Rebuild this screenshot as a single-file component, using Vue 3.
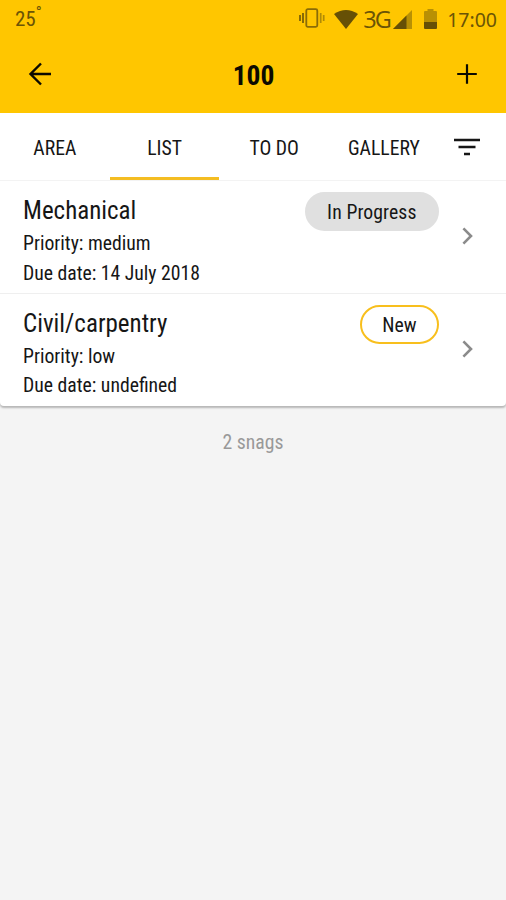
<template>
    <div class="page">
        <header class="header">
            <div class="status-bar">
                <span class="temperature">25<sup>°</sup></span>
                <div class="status-icons">
                    <svg class="vibrate" width="26" height="20" viewBox="0 0 26 20">
                        <rect x="7.3" y="1.2" width="11" height="17.6" rx="1.5" fill="none" stroke="#8a6c07"
                            stroke-width="1.8" />
                        <path d="M1 7v6M4 5v10" stroke="#735b08" stroke-width="1.7" />
                        <path d="M21.7 5v10M24.7 7v6" stroke="#b08b06" stroke-width="1.7" />
                    </svg>
                    <svg class="wifi" width="24" height="19" viewBox="0 0 24 19">
                        <path d="M0 4Q12-4 24 4L12 19Z" fill="#665006" />
                    </svg>
                    <span class="network">3G</span>
                    <svg class="signal" width="19" height="19" viewBox="0 0 19 19">
                        <path d="M0 19L19 0V19Z" fill="#b89004" />
                        <path d="M0 19L13.5 5.5V19Z" fill="#665006" />
                    </svg>
                    <svg class="battery" width="13" height="20" viewBox="0 0 13 20">
                        <path d="M0 3Q0 2 1 2H3.5V0H9.5V2H12Q13 2 13 3V13H0Z" fill="#b89004" />
                        <path d="M0 13H13V19Q13 20 12 20H1Q0 20 0 19Z" fill="#665006" />
                    </svg>
                    <span class="clock">17:00</span>
                </div>
            </div>
            <div class="title-bar">
                <svg width="24" height="24" viewBox="0 0 24 24" fill="none" stroke="#0c0a00" stroke-width="2.4">
                    <path d="M23 12H3M13 1.5L2.5 12L13 22.5" />
                </svg>
                <h1>{{ title }}</h1>
                <svg width="20" height="20" viewBox="0 0 20 20" fill="none" stroke="#0c0a00" stroke-width="2.2">
                    <path d="M10 0.2V19.8M0.2 10H19.8" />
                </svg>
            </div>
        </header>

        <nav class="tabs">
            <button v-for="tab in tabs" :key="tab" class="tab" :class="{ active: tab === activeTab }"
                @click="activeTab = tab">{{ tab }}</button>
            <div class="filter">
                <svg width="26" height="18" viewBox="0 0 26 18" stroke="#161616" stroke-width="2.6">
                    <path d="M0 2H26M4.5 9H21.5M10 16H16" />
                </svg>
            </div>
        </nav>

        <main class="list">
            <article v-for="snag in snags" :key="snag.name" class="snag">
                <div class="snag-info">
                    <h2>{{ snag.name }}</h2>
                    <p>Priority: {{ snag.priority }}</p>
                    <p>Due date: {{ snag.dueDate }}</p>
                </div>
                <span class="badge" :class="snag.type">{{ snag.status }}</span>
                <svg class="chevron" width="11" height="18" viewBox="0 0 11 18" fill="none" stroke="#8b8b8b"
                    stroke-width="2.6">
                    <path d="M1.4 1.4L9 9L1.4 16.6" />
                </svg>
            </article>
        </main>

        <p class="count">{{ snags.length }} snags</p>
    </div>
</template>

<script setup>
import { ref } from 'vue'

const title = '100'
const tabs = ['AREA', 'LIST', 'TO DO', 'GALLERY']
const activeTab = ref('LIST')

const snags = [
    { name: 'Mechanical', priority: 'medium', dueDate: '14 July 2018', status: 'In Progress', type: 'progress' },
    { name: 'Civil/carpentry', priority: 'low', dueDate: 'undefined', status: 'New', type: 'new' }
]
</script>

<style>
body {
    margin: 0;
    background: #f4f4f4;
}
</style>

<style scoped>
.page {
    min-height: 900px;
    background: #f4f4f4;
    color: #161616;
    font-family: "Roboto Condensed", Roboto, sans-serif;
    font-stretch: 75%;
    font-size: 19.7px;
}

h1,
h2,
p {
    margin: 0;
    font-weight: 400;
}

.header {
    height: 113px;
    background: #ffc600;
}

.status-bar {
    display: flex;
    justify-content: space-between;
    align-items: center;
    height: 38px;
    padding: 0 9px 0 15px;
    color: #6b5406;
}

.temperature {
    font-size: 21px;
}

.temperature sup {
    font-size: 16px;
    line-height: 0;
}

.status-icons {
    display: flex;
    align-items: center;
    height: 38px;
}

.vibrate {
    margin-top: -3px;
}

.wifi {
    margin-left: 9px;
}

.network {
    margin-left: 5px;
    font-family: "Open Sans", sans-serif;
    font-stretch: 88%;
    font-size: 23.5px;
    letter-spacing: -1.8px;
    line-height: 38px;
}

.signal {
    margin-left: 3px;
}

.battery {
    margin-left: 12px;
}

.clock {
    margin-left: 10px;
    font-family: "Noto Sans", sans-serif;
    font-stretch: 100%;
    font-size: 19.5px;
}

.title-bar {
    display: flex;
    justify-content: space-between;
    align-items: center;
    height: 71px;
    padding: 0 29px 0 28px;
}

.title-bar h1 {
    padding: 3px 2px 0 0;
    color: #0c0a00;
    font-size: 27.5px;
    font-weight: 700;
}

.tabs {
    display: flex;
    height: 68px;
    box-sizing: border-box;
    background: #fff;
    border-bottom: 1px solid #f3f3f3;
}

.tab {
    width: 109.7px;
    padding: 7px 0 0;
    border: 0;
    border-bottom: 3px solid transparent;
    background: none;
    color: inherit;
    font: inherit;
    font-stretch: inherit;
}

.tab.active {
    border-bottom-color: #f4bd22;
}

.filter {
    flex: 1;
    display: flex;
    align-items: center;
    justify-content: center;
    padding-right: 10px;
}

.list {
    border-radius: 0 0 4px 4px;
    background: #fff;
    box-shadow: 0 2px 2px rgba(0, 0, 0, 0.25);
}

.snag {
    display: flex;
    align-items: center;
    height: 112.5px;
    box-sizing: border-box;
    padding: 0 33px 0 23px;
    border-bottom: 1px solid #efefef;
}

.snag:last-child {
    border-bottom: 0;
}

.snag-info {
    flex: 1;
    align-self: flex-start;
    padding-top: 12px;
}

.snag-info h2 {
    font-size: 25px;
    line-height: 36px;
}

.snag-info p {
    line-height: 29.5px;
}

.badge {
    align-self: flex-start;
    height: 39px;
    box-sizing: border-box;
    margin: 11px 23px 0 0;
    padding: 0 20.5px;
    border: 2px solid #e0e0e0;
    border-radius: 20px;
    line-height: 37px;
}

.badge.progress {
    background: #e0e0e0;
    letter-spacing: 0.1px;
}

.badge.new {
    border-color: #f8bf1d;
    background: #fff;
}

.chevron {
    margin-top: -1px;
}

.count {
    padding-top: 25px;
    color: #999;
    text-align: center;
}
</style>
